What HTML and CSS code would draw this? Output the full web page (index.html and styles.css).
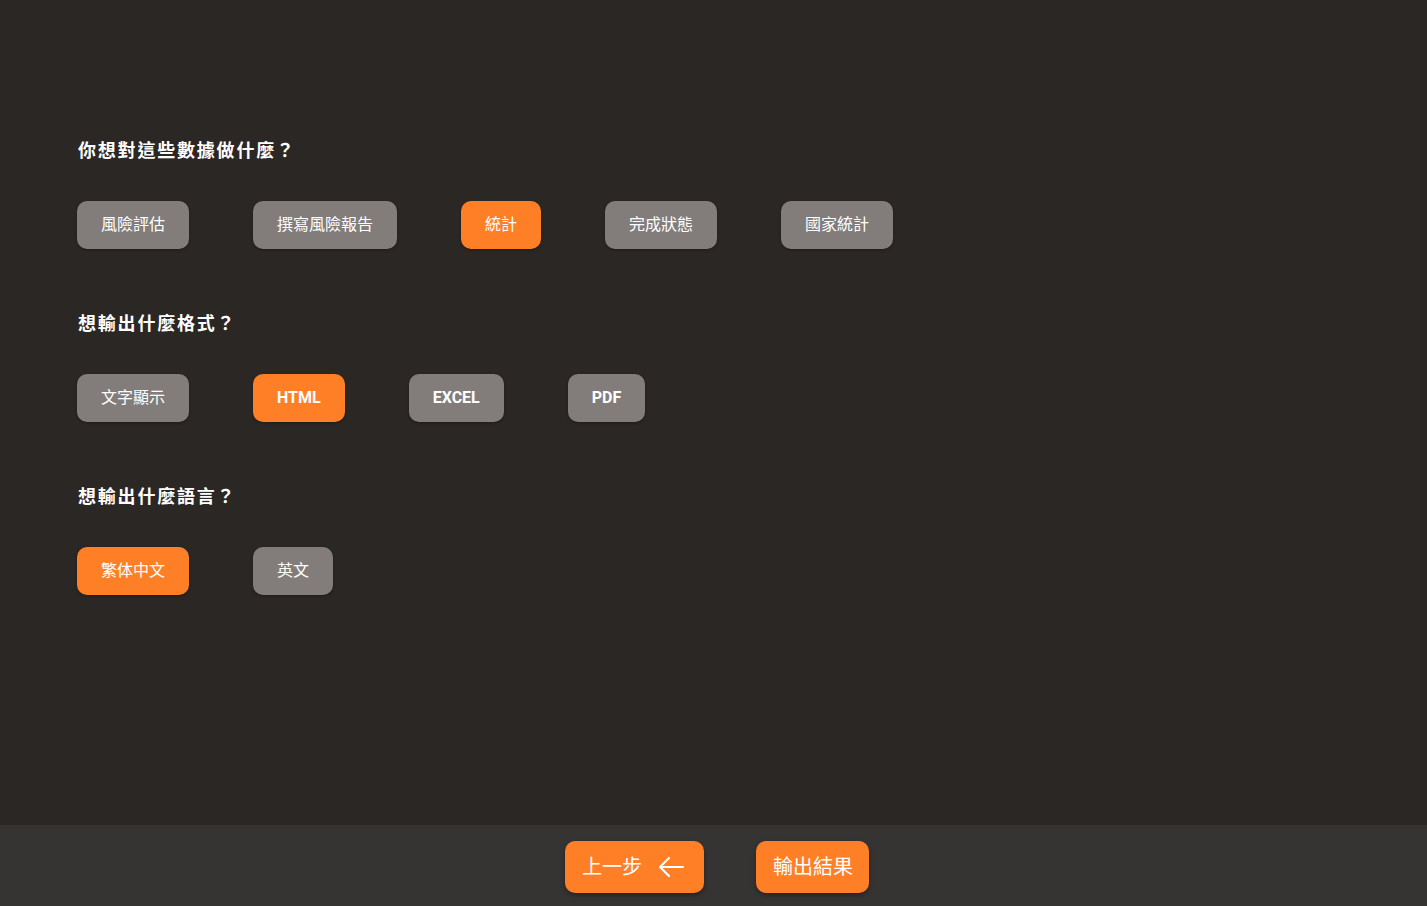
FILE: index.html
```html
<!DOCTYPE html>
<html lang="zh-Hant">
<head>
<meta charset="utf-8">
<title>輸出設定</title>
<link rel="stylesheet" href="styles.css">
</head>
<body>
<div class="page">
  <main class="main">
    <section class="group">
      <h2 class="question">你想對這些數據做什麼？</h2>
      <div class="options">
        <button class="opt">風險評估</button>
        <button class="opt">撰寫風險報告</button>
        <button class="opt active">統計</button>
        <button class="opt">完成狀態</button>
        <button class="opt">國家統計</button>
      </div>
    </section>
    <section class="group">
      <h2 class="question">想輸出什麼格式？</h2>
      <div class="options">
        <button class="opt">文字顯示</button>
        <button class="opt latin active">HTML</button>
        <button class="opt latin">EXCEL</button>
        <button class="opt latin">PDF</button>
      </div>
    </section>
    <section class="group">
      <h2 class="question">想輸出什麼語言？</h2>
      <div class="options">
        <button class="opt active">繁体中文</button>
        <button class="opt">英文</button>
      </div>
    </section>
  </main>
  <footer class="footer">
    <button class="nav-btn back">上一步
      <svg class="arrow" width="28" height="22" viewBox="0 0 28 22" fill="none" stroke="#fff" stroke-width="2.2" stroke-linecap="round" stroke-linejoin="round"><path d="M26 11H3M12 2L3 11l9 9"/></svg>
    </button>
    <button class="nav-btn">輸出結果</button>
  </footer>
</div>
</body>
</html>
```
FILE: styles.css
```css
* { box-sizing: border-box; }
html, body { margin: 0; padding: 0; height: 100%; }
body {
  background: #2b2725;
  font-family: Roboto, "Noto Sans CJK TC", "Noto Sans", sans-serif;
  color: #fff;
}
.page {
  display: flex;
  flex-direction: column;
  height: 906px;
}
.main {
  flex: 1;
  padding: 138px 0 0 77px;
  display: flex;
  flex-direction: column;
  gap: 62px;
}
.question {
  margin: 0 0 0 1px;
  font-size: 18px;
  line-height: 24px;
  padding-top: 1px;
  height: 24px;
  font-weight: 700;
  letter-spacing: 1.8px;
  color: #fff;
}
.options {
  margin-top: 39px;
  display: flex;
  gap: 64px;
}
.opt {
  height: 48px;
  padding: 0 24px 4px;
  border: none;
  border-radius: 10px;
  background: #827d7b;
  color: #fff;
  font-family: Roboto, "Noto Sans CJK TC", sans-serif;
  font-size: 16px;
  display: inline-flex;
  align-items: center;
  box-shadow: 0 1px 3px rgba(0,0,0,0.35);
  cursor: pointer;
}
.opt.latin { font-weight: 700; padding-bottom: 2px; }
.opt.active { background: #ff7f27; }
.footer {
  height: 81px;
  background: #363433;
  display: flex;
  justify-content: center;
  align-items: flex-start;
  padding-top: 16px;
  padding-left: 7px;
  gap: 52px;
}
.nav-btn {
  height: 52px;
  padding: 0 16px 4px 17px;
  border: none;
  border-radius: 10px;
  background: #ff7f27;
  color: #fff;
  font-family: Roboto, "Noto Sans CJK TC", sans-serif;
  font-size: 20px;
  display: inline-flex;
  align-items: center;
  gap: 15px;
  box-shadow: 0 2px 4px rgba(0,0,0,0.35);
  cursor: pointer;
}
.nav-btn.back { padding-right: 19px; }
.nav-btn .arrow { margin-top: 4px; }
.arrow { display: block; }
```
